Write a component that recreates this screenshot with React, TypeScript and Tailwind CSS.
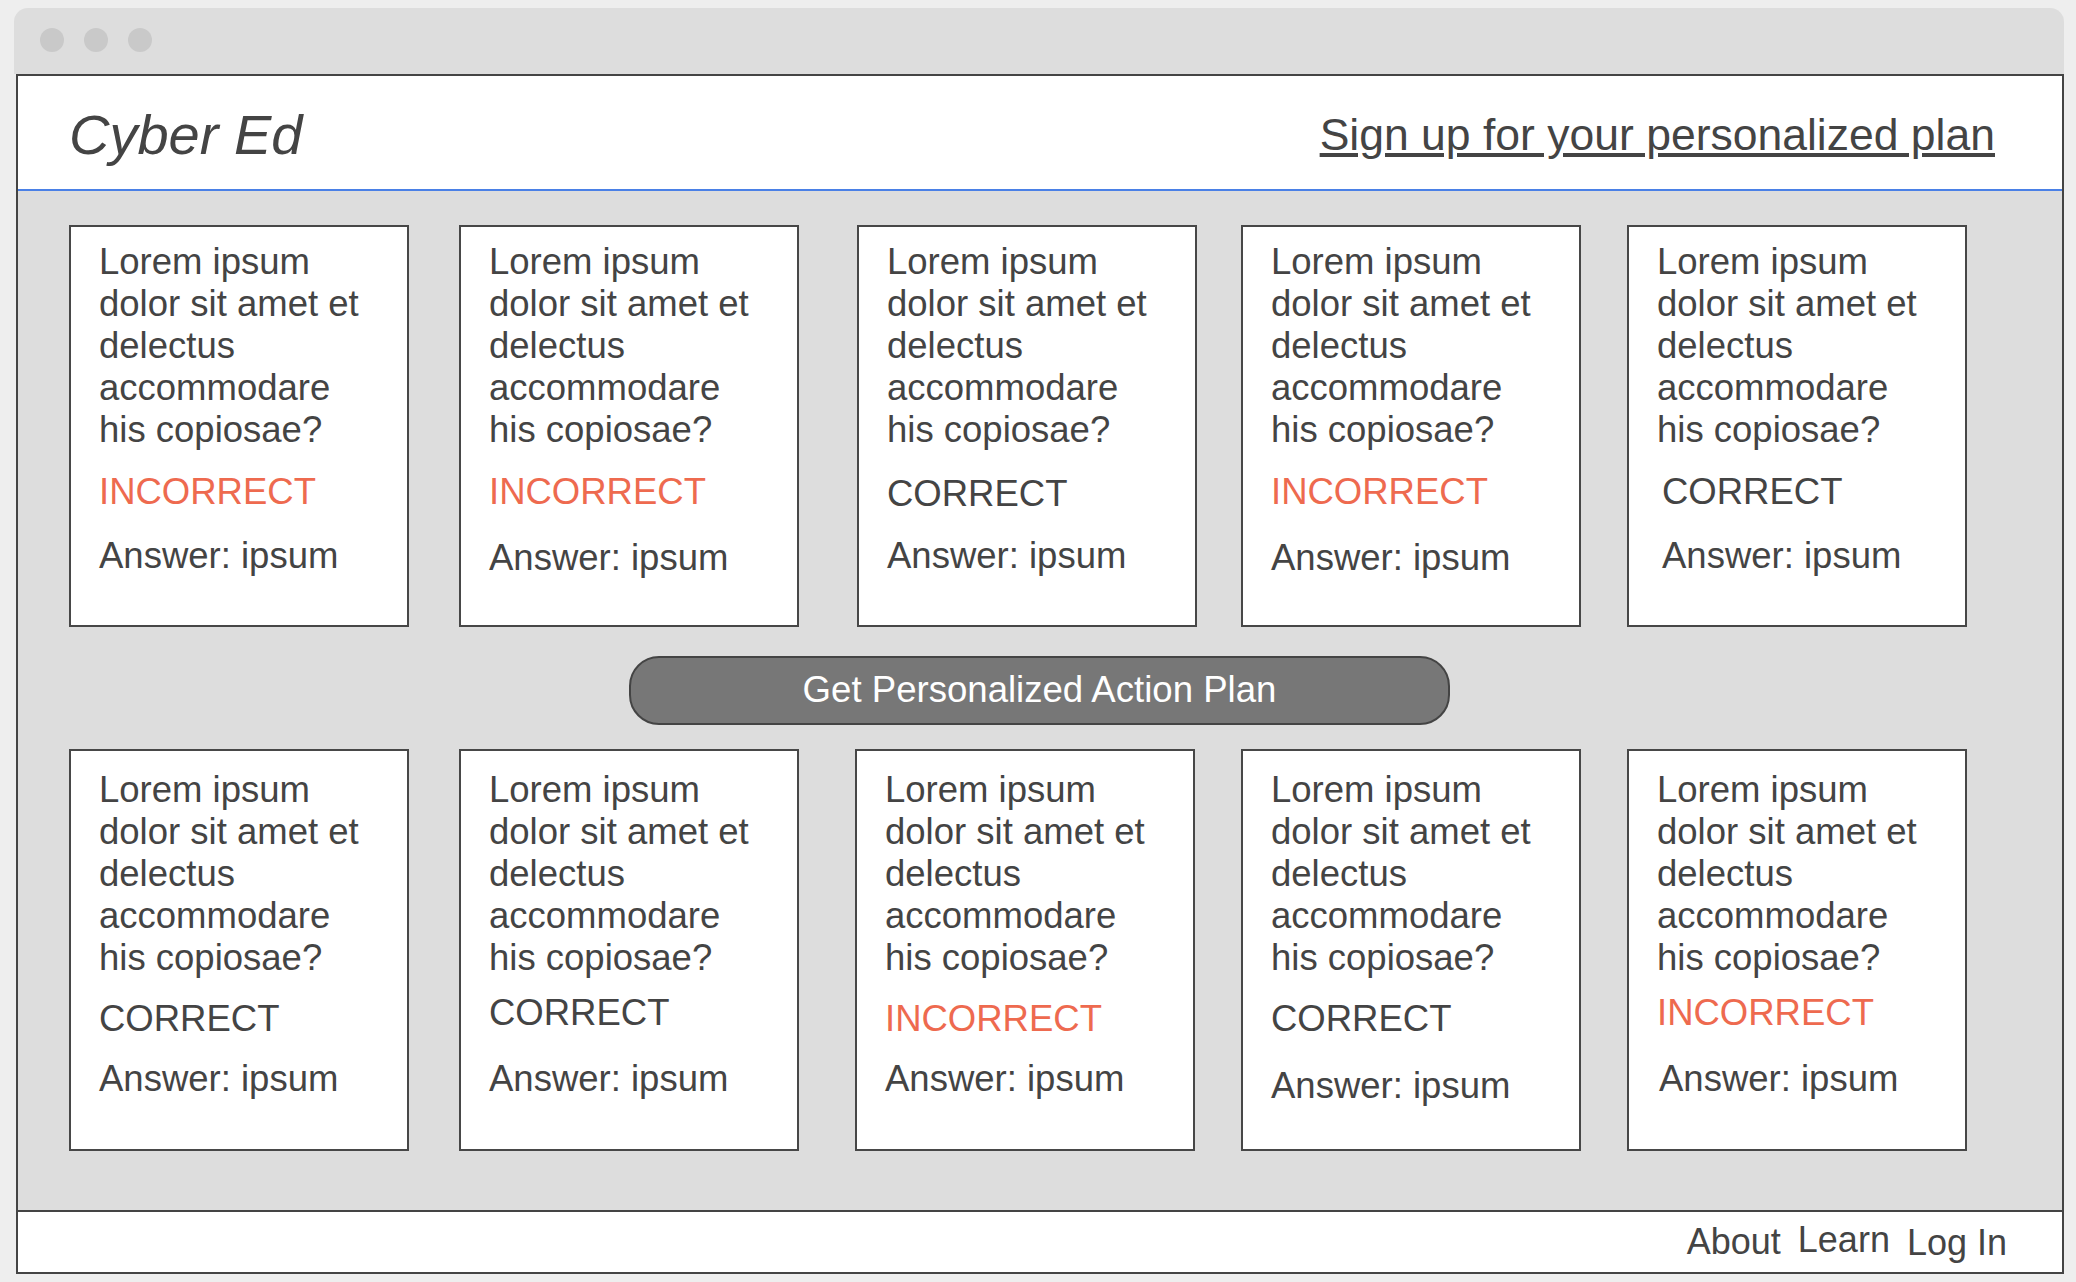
import React from 'react';

type Card = {
  status: 'CORRECT' | 'INCORRECT';
  ml: string;
  statusMt: string;
  answerMt: string;
  statusPl?: string;
  answerPl?: string;
};

const QUESTION = 'Lorem ipsum dolor sit amet et delectus accommodare his copiosae?';

const TOP_ROW: Card[] = [
  { status: 'INCORRECT', ml: 'ml-0', statusMt: 'mt-[20px]', answerMt: 'mt-[22px]' },
  { status: 'INCORRECT', ml: 'ml-[50px]', statusMt: 'mt-[20px]', answerMt: 'mt-[24px]' },
  { status: 'CORRECT', ml: 'ml-[58px]', statusMt: 'mt-[22px]', answerMt: 'mt-[20px]' },
  { status: 'INCORRECT', ml: 'ml-[44px]', statusMt: 'mt-[20px]', answerMt: 'mt-[24px]' },
  { status: 'CORRECT', ml: 'ml-[46px]', statusMt: 'mt-[20px]', answerMt: 'mt-[22px]', statusPl: 'pl-[5px]', answerPl: 'pl-[5px]' },
];

const BOTTOM_ROW: Card[] = [
  { status: 'CORRECT', ml: 'ml-0', statusMt: 'mt-[19px]', answerMt: 'mt-[18px]' },
  { status: 'CORRECT', ml: 'ml-[50px]', statusMt: 'mt-[13px]', answerMt: 'mt-[24px]' },
  { status: 'INCORRECT', ml: 'ml-[56px]', statusMt: 'mt-[19px]', answerMt: 'mt-[18px]' },
  { status: 'CORRECT', ml: 'ml-[46px]', statusMt: 'mt-[19px]', answerMt: 'mt-[25px]' },
  { status: 'INCORRECT', ml: 'ml-[46px]', statusMt: 'mt-[13px]', answerMt: 'mt-[24px]', answerPl: 'pl-[2px]' },
];

function QuizCard({ card, pt }: { card: Card; pt: string }) {
  const statusColor = card.status === 'INCORRECT' ? 'text-[#ee6a4f]' : 'text-[#444444]';
  return (
    <div className={`flex h-[402px] w-[340px] shrink-0 flex-col border-2 border-[#474747] bg-white pl-[28px] pr-[24px] text-[36.5px] ${pt} ${card.ml}`}>
      <p className="leading-[42px]">{QUESTION}</p>
      <p className={`leading-[42px] ${statusColor} ${card.statusMt} ${card.statusPl ?? ''}`}>{card.status}</p>
      <p className={`leading-[42px] ${card.answerMt} ${card.answerPl ?? ''}`}>Answer: ipsum</p>
    </div>
  );
}

export default function App() {
  return (
    <div className="min-h-[1282px] w-full bg-[#eeeeee] pl-[14px] pt-[8px] font-['Liberation_Sans',Arial,sans-serif] text-[36px] text-[#444444]">
      <div className="w-[2050px]">
        {/* Window title bar */}
        <div className="flex h-[66px] gap-[20px] rounded-t-[14px] bg-[#dddddd] pl-[26px] pt-[20px]">
          <span className="h-[24px] w-[24px] rounded-full bg-[#c9c9c9]" />
          <span className="h-[24px] w-[24px] rounded-full bg-[#c9c9c9]" />
          <span className="h-[24px] w-[24px] rounded-full bg-[#c9c9c9]" />
        </div>

        {/* Browser body */}
        <div className="ml-[2px] w-[2048px] border-2 border-[#444444] bg-[#dddddd]">
          <header className="flex h-[115px] items-start justify-between border-b-2 border-[#4a80e6] bg-white pl-[51px] pr-[67px]">
            <span className="mt-[31px] text-[56px] italic leading-none">Cyber Ed</span>
            <a href="#" className="mt-[37px] text-[44.5px] leading-none underline">
              Sign up for your personalized plan
            </a>
          </header>

          <main className="flex h-[1019px] flex-col pl-[51px] pt-[34px]">
            <div className="flex">
              {TOP_ROW.map((c, i) => (
                <QuizCard key={i} card={c} pt="pt-[14px]" />
              ))}
            </div>

            <div className="ml-[560px] mt-[29px] flex h-[69px] w-[821px] items-center justify-center rounded-[30px] border-2 border-[#444444] bg-[#777777] text-[36.6px] text-white">
              Get Personalized Action Plan
            </div>

            <div className="mt-[24px] flex">
              {BOTTOM_ROW.map((c, i) => (
                <QuizCard key={i} card={c} pt="pt-[18px]" />
              ))}
            </div>
          </main>

          <footer className="flex h-[62px] items-start justify-end border-t-2 border-[#444444] bg-white pr-[55px] leading-none">
            <span className="mt-[12px]">About</span>
            <span className="ml-[17px] mt-[10px]">Learn</span>
            <span className="ml-[17px] mt-[13px]">Log In</span>
          </footer>
        </div>
      </div>
    </div>
  );
}
